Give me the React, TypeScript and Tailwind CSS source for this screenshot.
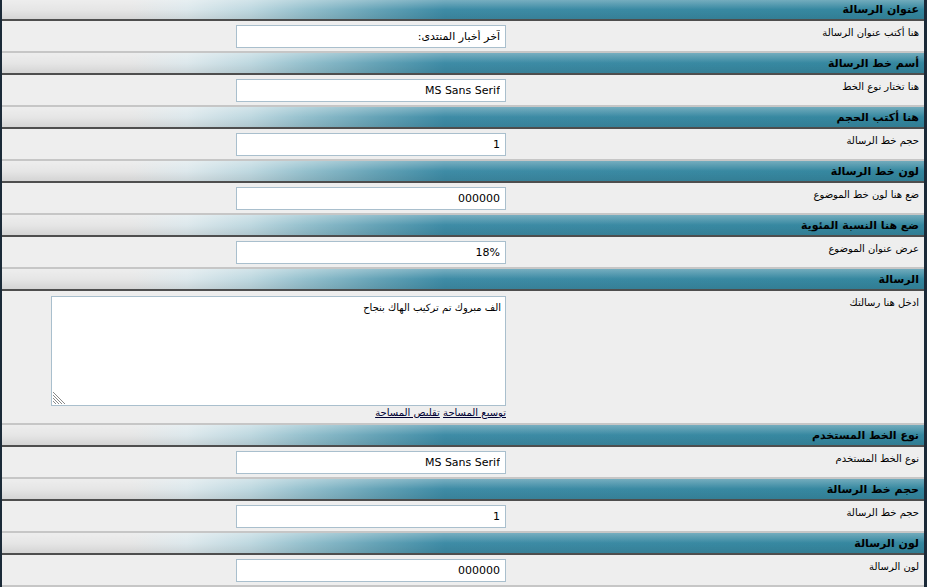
import { Fragment } from "react"

type Field = {
  title: string
  label: string
  value: string
  area?: boolean
}

const fields: Field[] = [
  { title: "عنوان الرسالة", label: "هنا أكتب عنوان الرسالة", value: "آخر أخبار المنتدى:" },
  { title: "أسم خط الرسالة", label: "هنا تختار نوع الخط", value: "MS Sans Serif" },
  { title: "هنا أكتب الحجم", label: "حجم خط الرسالة", value: "1" },
  { title: "لون خط الرسالة", label: "ضع هنا لون خط الموضوع", value: "000000" },
  { title: "ضع هنا النسبة المئوية", label: "عرض عنوان الموضوع", value: "18%" },
  { title: "الرسالة", label: "ادخل هنا رسالتك", value: "الف مبروك تم تركيب الهاك بنجاح", area: true },
  { title: "نوع الخط المستخدم", label: "نوع الخط المستخدم", value: "MS Sans Serif" },
  { title: "حجم خط الرسالة", label: "حجم خط الرسالة", value: "1" },
  { title: "لون الرسالة", label: "لون الرسالة", value: "000000" },
]

function Header({ title, first }: { title: string; first?: boolean }) {
  return (
    <div
      className={`flex items-center pr-[5px] border-b-2 border-[#4e4e4e] bg-[linear-gradient(180deg,rgba(255,255,255,0.3)_0%,rgba(255,255,255,0)_50%,rgba(0,0,0,0.08)_100%),linear-gradient(90deg,#e6e6e6_0%,#e6e6e6_14%,#dde8ec_20%,#bed8e0_27%,#94c0cd_33%,#63a2b6_41%,#3e8ca6_48%,#34879f_100%)] ${first ? "h-[21px]" : "h-[22px]"}`}
    >
      <span className="text-[11px] font-bold text-black leading-none">{title}</span>
    </div>
  )
}

function Grip() {
  return (
    <svg className="absolute left-[2px] bottom-[2px]" width="13" height="13" viewBox="0 0 13 13">
      <g stroke="#8a8a8a" strokeWidth="1">
        <line x1="0" y1="1" x2="12" y2="13" />
        <line x1="0" y1="4" x2="9" y2="13" />
        <line x1="0" y1="7" x2="6" y2="13" />
        <line x1="0" y1="10" x2="3" y2="13" />
      </g>
    </svg>
  )
}

function Row({ field }: { field: Field }) {
  return (
    <div className="grid grid-cols-[414px_1fr] bg-[#eeeeee] border-b-2 border-[#c6c6c6]">
      <div className="pr-[5px] pt-[6px] text-[10px] text-black leading-tight">{field.label}</div>
      <div className="pr-[4px] pt-[4px]">
        {field.area ? (
          <div className="w-[455px] pt-[1px] pb-[4px]">
            <div className="relative">
              <textarea
                readOnly
                dir="rtl"
                defaultValue={field.value}
                className="block w-[455px] h-[110px] resize-none bg-white border border-[#a9bfcd] px-[4px] py-[5px] text-[10px] text-black leading-tight outline-none"
              />
              <Grip />
            </div>
            <div className="mt-[1px] h-[12px] text-[10px] leading-[12px] text-[#000033]">
              <a href="#" className="underline">توسيع المساحة</a>{" "}
              <a href="#" className="underline">تقليص المساحة</a>
            </div>
          </div>
        ) : (
          <input
            readOnly
            dir="rtl"
            defaultValue={field.value}
            className="block w-[270px] h-[23px] mb-[3px] bg-white border border-[#a9bfcd] px-[5px] text-[11px] text-black outline-none"
          />
        )}
      </div>
    </div>
  )
}

export default function App() {
  return (
    <main
      dir="rtl"
      className="min-h-screen bg-[#1b2a38] pl-[2px] pr-[3px] font-['Tahoma','DejaVu_Sans',sans-serif]"
    >
      <div className="bg-[#eeeeee]">
        {fields.map((field, index) => (
          <Fragment key={index}>
            <Header title={field.title} first={index === 0} />
            <Row field={field} />
          </Fragment>
        ))}
      </div>
    </main>
  )
}
